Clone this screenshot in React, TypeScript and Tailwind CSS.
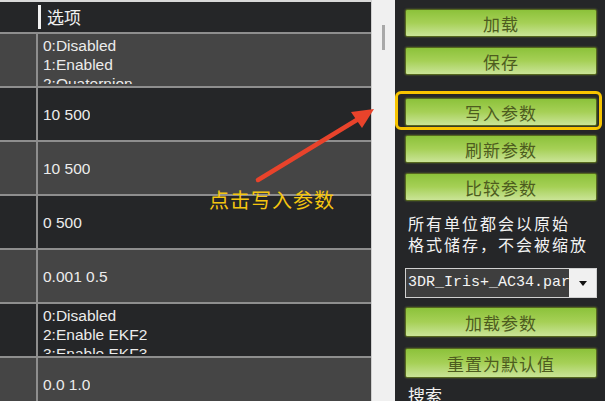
import React from "react";

const rows = [
  ["0:Disabled", "1:Enabled", "2:Quaternion"],
  ["10 500"],
  ["10 500"],
  ["0 500"],
  ["0.001 0.5"],
  ["0:Disabled", "2:Enable EKF2", "3:Enable EKF3"],
  ["0.0 1.0"],
];

const cjk = "font-['Noto_Sans_CJK_SC','Noto_Sans',sans-serif]";

function GreenButton({ label, className = "" }: { label: string; className?: string }) {
  return (
    <div
      className={`h-[28px] flex items-center justify-center rounded-[2px] border border-[#56681f] bg-gradient-to-b from-[#8cc23a] via-[#a6d056] to-[#cae496] text-[#4d5c1f] text-[17px] leading-none tracking-[1px] shadow-[0_0_2px_rgba(140,170,60,0.6)] ${cjk} ${className}`}
    >
      {label}
    </div>
  );
}

export default function App() {
  return (
    <div className="relative w-[605px] h-[401px] overflow-hidden flex bg-[#252628] font-['Liberation_Sans',Arial,sans-serif]">
      {/* parameter table */}
      <div className="w-[371px] flex flex-col">
        <div className="h-[32px] shrink-0 flex border-t-2 border-[#d9d9d9] bg-[#252628]">
          <div className="w-[38px] shrink-0" />
          <div className="flex items-center">
            <div className="w-[3px] h-[24px] bg-[#f2f2f2]" />
            <span className={`ml-[6px] text-[17px] text-[#f0f0f0] ${cjk}`}>选项</span>
          </div>
        </div>
        {rows.map((lines, i) => (
          <div
            key={i}
            className={`h-[54px] shrink-0 flex border-t-2 border-[#8e8e8e] ${i % 2 === 0 ? "bg-[#454545]" : "bg-[#252628]"}`}
          >
            <div className="w-[38px] shrink-0 border-r-2 border-[#8e8e8e]" />
            <div
              className={`pl-[5px] text-[15.5px] text-[#ececec] leading-[19px] overflow-hidden ${lines.length > 1 ? "h-[50px] pt-[2px]" : "flex items-center"}`}
            >
              {lines.map((l) => (
                <div key={l}>{l}</div>
              ))}
            </div>
          </div>
        ))}
      </div>

      {/* scrollbar */}
      <div className="w-[24px] shrink-0 bg-[#f0f0f0] border-l border-[#cfcfcf]">
        <div className="mt-[25px] ml-[10px] w-[3px] h-[25px] bg-[#a8a8a8]" />
      </div>

      {/* right panel */}
      <div className="w-[210px] shrink-0 bg-[#252628] pl-[10px] pr-[8px] pt-[9px]">
        <GreenButton label="加载" />
        <GreenButton label="保存" className="mt-[10px]" />
        <div className="relative mt-[23px]">
          <GreenButton label="写入参数" />
          <div className="absolute -left-[10px] -right-[5px] -top-[7px] -bottom-[4px] border-[3px] border-[#f7c400] rounded-[6px]" />
        </div>
        <GreenButton label="刷新参数" className="mt-[9px]" />
        <GreenButton label="比较参数" className="mt-[10px]" />
        <div className={`mt-[12px] pl-[3px] text-[16px] leading-[21px] tracking-[2px] text-[#f2f2f2] whitespace-nowrap ${cjk}`}>
          <div>所有单位都会以原始</div>
          <div>格式储存，不会被缩放</div>
        </div>
        <div className="mt-[13px] h-[30px] flex border border-[#d0d0d0]">
          <div className="flex-1 bg-[#3e3e3e] overflow-hidden whitespace-nowrap pl-[2px] flex items-center text-[15px] text-[#f4f4f4] font-['Liberation_Mono',monospace]">
            3DR_Iris+_AC34.param
          </div>
          <div className="w-[27px] bg-[#f0f0f0] flex items-center justify-center">
            <svg width="8" height="5" viewBox="0 0 8 5">
              <polygon points="0,0 8,0 4,5" fill="#111" />
            </svg>
          </div>
        </div>
        <GreenButton label="加载参数" className="mt-[9px] h-[30px]" />
        <GreenButton label="重置为默认值" className="mt-[11px] h-[30px]" />
        <div className={`mt-[7px] pl-[3px] text-[17px] leading-[20px] text-[#f2f2f2] ${cjk}`}>搜索</div>
      </div>

      {/* annotation */}
      <svg className="absolute inset-0 pointer-events-none" width="605" height="401">
        <line x1="258" y1="180" x2="360" y2="118" stroke="#e8432b" strokeWidth="4.5" strokeLinecap="round" />
        <polygon points="374,109 351,112 362,128" fill="#e8432b" />
      </svg>
      <div className={`absolute left-[209px] top-[189px] text-[20px] leading-[22px] tracking-[1px] text-[#f5c510] ${cjk}`}>
        点击写入参数
      </div>
    </div>
  );
}
